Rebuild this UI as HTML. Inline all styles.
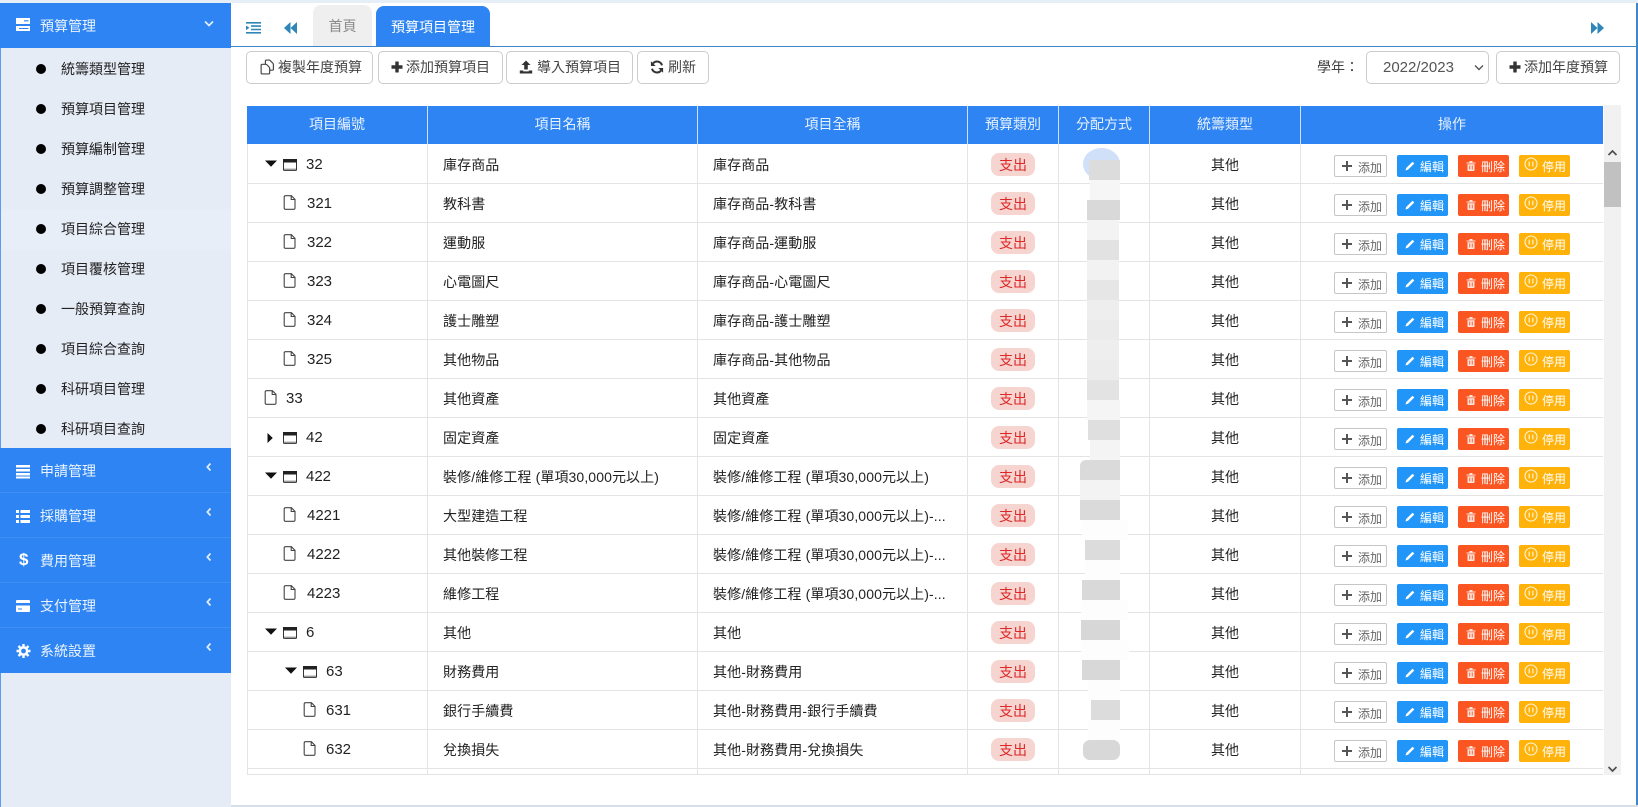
<!DOCTYPE html>
<html lang="zh-Hant"><head><meta charset="utf-8"><title>預算項目管理</title>
<style>
*{box-sizing:border-box}
html,body{margin:0;padding:0;width:1638px;height:807px;overflow:hidden;background:#fff;font-family:"Liberation Sans","Noto Sans CJK TC",sans-serif;font-size:14px;color:#222}
.a{position:absolute}
#top{left:0;top:0;width:1638px;height:3px;background:#e6eef8}
#side{left:0;top:3px;width:231px;height:804px;background:#e6ecf6;border-left:1px solid #5a9bee}
.hd{position:absolute;left:-1px;width:231px;height:45px;background:#2d84f2;color:#eaf3ff;border-bottom:1px solid #3e8ef4}
.hd b{position:absolute;left:40px;top:0;font-weight:400;line-height:47px;font-size:14px;white-space:nowrap}
.hd svg{position:absolute;left:16px;top:15px}
.hd i{position:absolute;left:205px;top:11px;font-style:normal}
.si{position:absolute;left:0;width:230px;height:40px;line-height:40px;color:#222}
.si b{font-weight:400;position:absolute;left:60px;top:0;font-size:14px;white-space:nowrap}
.si i{position:absolute;left:35px;top:15px;width:10px;height:10px;border-radius:50%;background:#000}
#rb{left:1636px;top:3px;width:2px;height:802px;background:#3f86c9}
#bb{left:231px;top:805px;width:1407px;height:2px;background:#d6e0ea}
#tl{left:231px;top:45.5px;width:1405px;height:1.5px;background:#3f86c9}
.tab{position:absolute;height:41px;border-radius:8px 8px 0 0;text-align:center;line-height:42px}
.btn{position:absolute;top:51px;height:33px;border:1px solid #ccc;border-radius:5px;background:#fff;color:#444;line-height:31px;font-size:14px;white-space:nowrap}
.btn svg{position:absolute;top:8px}
.btn b{position:absolute;top:0;font-weight:400}
#th{left:247px;top:106px;width:1356px;height:38px;background:#2d84f2;color:#e8f2ff}
#th span{position:absolute;top:0;height:38px;line-height:37px;text-align:center;border-right:1px solid #cfe1fb;font-size:14px}
#sb{left:1604px;top:105px;width:17px;height:670px;background:#f1f1f1}
#th span:last-child{border-right:0}
.vl{position:absolute;top:144px;width:1px;height:630px;background:#e4e4e4}
.r{position:absolute;left:247px;width:1356px;height:40px;border-bottom:1px solid #e4e4e4;line-height:42px;color:#222}
.r>span{position:absolute;top:0;white-space:nowrap}
.r>svg{position:absolute}
.r>span.d{font-size:15px}
.ca{top:16px}.wi{top:15px}.fi{top:12px}
.n{left:196px;letter-spacing:.1px}.f{left:466px;letter-spacing:.1px}.o{left:960px;width:36px;text-align:center}
.c{left:744px!important;top:9px!important;width:44px;height:23px;line-height:24px;border-radius:8px;background:#f6d5d0;color:#dc2828;text-align:center;font-size:14px;letter-spacing:0}
.p{position:absolute;top:11px;height:22px;width:51px;border-radius:2px;color:#fff;font-size:12px;line-height:24px;font-style:normal}
.p em{position:absolute;left:23px;top:0;font-style:normal;white-space:nowrap}
.p svg{position:absolute;left:7px;top:5px}
.p1{left:1087px;width:53px;background:#fff;border:1px solid #c6c6c6;color:#666;line-height:24px}
.p1 em{left:23px}.p1 svg{left:6px;top:4px}
.p2{left:1150px;background:#2196f8}
.p3{left:1211px;background:#fb5522}
.p4{left:1272px;background:#ffb30a}
.p4 svg{left:5px;top:2px}
.s{position:absolute;height:20px}
</style></head><body>
<svg width="0" height="0" style="position:absolute">
<symbol id="win" viewBox="0 0 14 12"><rect x=".5" y=".5" width="13" height="11" rx="1" fill="#fff" stroke="#333"/><rect x="0" y="0" width="14" height="3.5" fill="#222"/><rect x="1" y="9.6" width="12" height="1.6" fill="#999"/></symbol>
<symbol id="file" viewBox="0 0 13 15"><path d="M1.2 2Q1.2.7 2.5.7H8.4L12 4.3V13Q12 14.3 10.7 14.3H2.5Q1.2 14.3 1.2 13ZM8.2.9V4.5H12" fill="none" stroke="#444" stroke-width="1.1"/></symbol>
<symbol id="down" viewBox="0 0 12 7"><path d="M0 .5H12L6 6.8Z" fill="#111"/></symbol>
<symbol id="right" viewBox="0 0 7 12"><path d="M.5 0V12L6.8 6Z" fill="#111"/></symbol>
<symbol id="plus" viewBox="0 0 12 12"><path d="M5 1H7V5H11V7H7V11H5V7H1V5H5Z" fill="#555"/></symbol>
<symbol id="plusb" viewBox="0 0 12 12"><path d="M4.3 .5H7.7V4.3H11.5V7.7H7.7V11.5H4.3V7.7H.5V4.3H4.3Z" fill="#333"/></symbol>
<symbol id="pen" viewBox="0 0 12 12"><path d="M1.5 10.5L2.2 8 8.5 1.7 10.3 3.5 4 9.8Z" fill="#fff"/></symbol>
<symbol id="trash" viewBox="0 0 12 12"><path d="M1.5 2.5H10.5V3.5H1.5ZM4.5 1H7.5V2.5H4.5ZM2.5 4.2H9.5V10.2Q9.5 11 8.7 11H3.3Q2.5 11 2.5 10.2ZM4.3 5.5V9.5H5.2V5.5ZM6.8 5.5V9.5H7.7V5.5Z" fill="#fff" fill-opacity=".85" fill-rule="evenodd"/></symbol>
<symbol id="pause" viewBox="0 0 14 14"><circle cx="7" cy="7" r="6" fill="none" stroke="#fff" stroke-opacity=".85" stroke-width="1.1"/><path d="M5.2 4.6V9.4M8.8 4.6V9.4" stroke="#fff" stroke-opacity=".85" stroke-width="1.2"/></symbol>
<symbol id="chevl" viewBox="0 0 8 10"><path d="M5.5 1.5L2.3 5 5.5 8.5" fill="none" stroke="#e2eeff" stroke-width="1.7"/></symbol>
<symbol id="dbl" viewBox="0 0 13 12"><path d="M6.5 0V12L0 6ZM13 0V12L6.5 6Z" fill="#2f87b8"/></symbol>
</svg>
<div id="top" class="a"></div>
<div id="side" class="a">
<div class="hd" style="top:0;border:0"><svg width="15" height="14" viewBox="0 0 15 14" style="top:15px"><path d="M0 0H14V6H0ZM0 8H14V13H0Z" fill="#fff"/><path d="M8 2.2H12.5V3.4H8ZM3 10H12.5V11H3Z" fill="#2d84f2"/></svg><b>預算管理</b><i style="left:203px;top:17px"><svg width="12" height="8" viewBox="0 0 12 8" style="position:static;display:block"><path d="M2 1.5L6 5.5 10 1.5" fill="none" stroke="#e2eeff" stroke-width="1.7"/></svg></i></div>
<div class="si" style="top:46px"><i></i><b>統籌類型管理</b></div>
<div class="si" style="top:86px"><i></i><b>預算項目管理</b></div>
<div class="si" style="top:126px"><i></i><b>預算編制管理</b></div>
<div class="si" style="top:166px"><i></i><b>預算調整管理</b></div>
<div class="si" style="top:206px;background:#e8eef8"><i></i><b>項目綜合管理</b></div>
<div class="si" style="top:246px"><i></i><b>項目覆核管理</b></div>
<div class="si" style="top:286px"><i></i><b>一般預算查詢</b></div>
<div class="si" style="top:326px"><i></i><b>項目綜合查詢</b></div>
<div class="si" style="top:366px"><i></i><b>科研項目管理</b></div>
<div class="si" style="top:406px"><i></i><b>科研項目查詢</b></div>
<div class="hd" style="top:445px"><svg width="15" height="14" viewBox="0 0 15 14" style="top:17px"><path d="M0 0H14V2.5H0ZM0 4H14V6.5H0ZM0 8H14V10.5H0ZM0 11.5H14V13.5H0Z" fill="#fff"/></svg><b>申請管理</b><i><svg width="8" height="10" style="position:static"><use href="#chevl"/></svg></i></div>
<div class="hd" style="top:490px"><svg width="15" height="14" viewBox="0 0 15 14" style="top:17px"><path d="M0 0H3V3H0ZM4.5 0H14V3H4.5ZM0 5H3V8H0ZM4.5 5H14V8H4.5ZM0 10H3V13H0ZM4.5 10H14V13H4.5Z" fill="#fff"/></svg><b>採購管理</b><i><svg width="8" height="10" style="position:static"><use href="#chevl"/></svg></i></div>
<div class="hd" style="top:535px"><span class="a" style="left:19px;top:0;line-height:44px;font-size:17px;font-weight:700;color:#fff">$</span><b>費用管理</b><i><svg width="8" height="10" style="position:static"><use href="#chevl"/></svg></i></div>
<div class="hd" style="top:580px"><svg width="15" height="13" viewBox="0 0 15 13" style="top:17px"><path d="M1 0H13Q14 0 14 1V3H0V1Q0 0 1 0ZM0 5.5H14V11Q14 12 13 12H1Q0 12 0 11ZM2 8.5V9.5H6V8.5Z" fill="#fff" fill-rule="evenodd"/></svg><b>支付管理</b><i><svg width="8" height="10" style="position:static"><use href="#chevl"/></svg></i></div>
<div class="hd" style="top:625px;border:0"><svg width="15" height="14" viewBox="0 0 14 14" style="top:16px"><circle cx="7" cy="7" r="3.7" fill="none" stroke="#fff" stroke-width="2.6"/><path d="M7 0V14M0 7H14M2 2L12 12M12 2L2 12" stroke="#fff" stroke-width="2.4" stroke-dasharray="2.2 9.6 2.2 0"/></svg><b>系統設置</b><i><svg width="8" height="10" style="position:static"><use href="#chevl"/></svg></i></div>
</div>

<svg class="a" style="left:246px;top:22px" width="15" height="12" viewBox="0 0 15 12"><path d="M0 0H15V1.6H0ZM5 3.3H15V4.9H5ZM5 6.7H15V8.3H5ZM0 10H15V11.6H0ZM0 3.5L3.5 5.8 0 8.1Z" fill="#2f87b8"/></svg>
<svg class="a" style="left:284px;top:22px" width="13" height="12"><use href="#dbl"/></svg>
<div class="tab" style="left:313px;top:5px;width:59px;background:#efefef;color:#8a8a8a">首頁</div>
<div class="tab" style="left:376px;top:6px;width:114px;height:40px;background:#2d84f2;color:#fff">預算項目管理</div>
<svg class="a" style="left:1591px;top:22px;transform:scaleX(-1)" width="13" height="12"><use href="#dbl"/></svg>
<div id="tl" class="a"></div>
<div id="rb" class="a"></div>
<div id="bb" class="a"></div>

<div class="btn" style="left:246px;width:127px"><svg style="left:12px;top:7px" width="16" height="16" viewBox="0 0 15 15"><path d="M6 4.5V2Q6 1 7 1H9.5Q10 1 10.5 1.5L13 4Q13.5 4.5 13.5 5V9.5Q13.5 10.5 12.5 10.5H10M2 6Q2 5 3 5H6Q7 5 7.5 5.5L9.5 7.5Q10 8 10 9V13Q10 14 9 14H3Q2 14 2 13Z" fill="none" stroke="#444" stroke-width="1.1"/></svg><b style="left:31px">複製年度預算</b></div>
<div class="btn" style="left:378px;width:125px"><svg style="left:12px;top:9px" width="12" height="12"><use href="#plusb"/></svg><b style="left:27px">添加預算項目</b></div>
<div class="btn" style="left:506px;width:127px"><svg style="left:12px" width="14" height="14" viewBox="0 0 14 14"><path d="M7 .5L11.5 5H8.8V9.5H5.2V5H2.5ZM.8 10.5H4.2V11.4H9.8V10.5H13.2V13.5H.8Z" fill="#333"/></svg><b style="left:30px">導入預算項目</b></div>
<div class="btn" style="left:637px;width:72px"><svg style="left:12px" width="14" height="14" viewBox="0 0 14 14"><path d="M12 5.3A5.2 5.2 0 0 0 3 3.4M2 8.7A5.2 5.2 0 0 0 11 10.6" fill="none" stroke="#333" stroke-width="2"/><path d="M.9 1.2V6H5.7ZM13.1 12.8V8H8.3Z" fill="#333"/></svg><b style="left:30px">刷新</b></div>
<span class="a" style="left:1317px;top:51px;line-height:33px;color:#444;white-space:nowrap">學年：</span>
<div class="btn" style="left:1366px;width:123px"><b style="left:16px;font-size:15px;color:#555">2022/2023</b><svg style="left:107px;top:12px" width="10" height="7" viewBox="0 0 10 7"><path d="M1 1.5L5 5.5 9 1.5" fill="none" stroke="#555" stroke-width="1.4"/></svg></div>
<div class="btn" style="left:1496px;width:124px"><svg style="left:12px;top:9px" width="12" height="12"><use href="#plusb"/></svg><b style="left:27px">添加年度預算</b></div>

<div id="sb" class="a"></div>
<div class="a" style="left:1604px;top:162px;width:17px;height:45px;background:#c1c1c1"></div>
<svg class="a" style="left:1607px;top:149px" width="11" height="8" viewBox="0 0 11 8"><path d="M1.5 6L5.5 2 9.5 6" fill="none" stroke="#505050" stroke-width="1.7"/></svg>
<svg class="a" style="left:1607px;top:765px" width="11" height="8" viewBox="0 0 11 8"><path d="M1.5 2L5.5 6 9.5 2" fill="none" stroke="#505050" stroke-width="1.7"/></svg>

<div id="th" class="a"><span style="left:0;width:181px">項目編號</span><span style="left:181px;width:270px">項目名稱</span><span style="left:451px;width:270px">項目全稱</span><span style="left:721px;width:91px">預算類別</span><span style="left:812px;width:91px">分配方式</span><span style="left:903px;width:151px">統籌類型</span><span style="left:1054px;width:302px">操作</span></div>

<div class="vl" style="left:247px"></div><div class="vl" style="left:427px"></div><div class="vl" style="left:697px"></div><div class="vl" style="left:967px"></div><div class="vl" style="left:1058px"></div><div class="vl" style="left:1149px"></div><div class="vl" style="left:1300px"></div>
<div class="a" style="left:247px;top:774px;width:1356px;height:1px;background:#e4e4e4"></div>

<div class="r" style="top:144px"><svg class="ca" style="left:18px" width="12" height="7"><use href="#down"/></svg><svg class="wi" style="left:36px" width="14" height="12"><use href="#win"/></svg><span class="d" style="left:59px">32</span><span class="n">庫存商品</span><span class="f">庫存商品</span><span class="c">支出</span><span class="o">其他</span><i class="p p1"><svg width="12" height="12"><use href="#plus"/></svg><em>添加</em></i><i class="p p2"><svg width="12" height="12"><use href="#pen"/></svg><em>編輯</em></i><i class="p p3"><svg width="12" height="12"><use href="#trash"/></svg><em>刪除</em></i><i class="p p4"><svg width="14" height="14"><use href="#pause"/></svg><em>停用</em></i></div>
<div class="r" style="top:183px"><svg class="fi" style="left:36px" width="13" height="15"><use href="#file"/></svg><span class="d" style="left:60px">321</span><span class="n">教科書</span><span class="f">庫存商品-教科書</span><span class="c">支出</span><span class="o">其他</span><i class="p p1"><svg width="12" height="12"><use href="#plus"/></svg><em>添加</em></i><i class="p p2"><svg width="12" height="12"><use href="#pen"/></svg><em>編輯</em></i><i class="p p3"><svg width="12" height="12"><use href="#trash"/></svg><em>刪除</em></i><i class="p p4"><svg width="14" height="14"><use href="#pause"/></svg><em>停用</em></i></div>
<div class="r" style="top:222px"><svg class="fi" style="left:36px" width="13" height="15"><use href="#file"/></svg><span class="d" style="left:60px">322</span><span class="n">運動服</span><span class="f">庫存商品-運動服</span><span class="c">支出</span><span class="o">其他</span><i class="p p1"><svg width="12" height="12"><use href="#plus"/></svg><em>添加</em></i><i class="p p2"><svg width="12" height="12"><use href="#pen"/></svg><em>編輯</em></i><i class="p p3"><svg width="12" height="12"><use href="#trash"/></svg><em>刪除</em></i><i class="p p4"><svg width="14" height="14"><use href="#pause"/></svg><em>停用</em></i></div>
<div class="r" style="top:261px"><svg class="fi" style="left:36px" width="13" height="15"><use href="#file"/></svg><span class="d" style="left:60px">323</span><span class="n">心電圖尺</span><span class="f">庫存商品-心電圖尺</span><span class="c">支出</span><span class="o">其他</span><i class="p p1"><svg width="12" height="12"><use href="#plus"/></svg><em>添加</em></i><i class="p p2"><svg width="12" height="12"><use href="#pen"/></svg><em>編輯</em></i><i class="p p3"><svg width="12" height="12"><use href="#trash"/></svg><em>刪除</em></i><i class="p p4"><svg width="14" height="14"><use href="#pause"/></svg><em>停用</em></i></div>
<div class="r" style="top:300px"><svg class="fi" style="left:36px" width="13" height="15"><use href="#file"/></svg><span class="d" style="left:60px">324</span><span class="n">護士雕塑</span><span class="f">庫存商品-護士雕塑</span><span class="c">支出</span><span class="o">其他</span><i class="p p1"><svg width="12" height="12"><use href="#plus"/></svg><em>添加</em></i><i class="p p2"><svg width="12" height="12"><use href="#pen"/></svg><em>編輯</em></i><i class="p p3"><svg width="12" height="12"><use href="#trash"/></svg><em>刪除</em></i><i class="p p4"><svg width="14" height="14"><use href="#pause"/></svg><em>停用</em></i></div>
<div class="r" style="top:339px"><svg class="fi" style="left:36px" width="13" height="15"><use href="#file"/></svg><span class="d" style="left:60px">325</span><span class="n">其他物品</span><span class="f">庫存商品-其他物品</span><span class="c">支出</span><span class="o">其他</span><i class="p p1"><svg width="12" height="12"><use href="#plus"/></svg><em>添加</em></i><i class="p p2"><svg width="12" height="12"><use href="#pen"/></svg><em>編輯</em></i><i class="p p3"><svg width="12" height="12"><use href="#trash"/></svg><em>刪除</em></i><i class="p p4"><svg width="14" height="14"><use href="#pause"/></svg><em>停用</em></i></div>
<div class="r" style="top:378px"><svg class="fi" style="left:17px" width="13" height="15"><use href="#file"/></svg><span class="d" style="left:39px">33</span><span class="n">其他資產</span><span class="f">其他資產</span><span class="c">支出</span><span class="o">其他</span><i class="p p1"><svg width="12" height="12"><use href="#plus"/></svg><em>添加</em></i><i class="p p2"><svg width="12" height="12"><use href="#pen"/></svg><em>編輯</em></i><i class="p p3"><svg width="12" height="12"><use href="#trash"/></svg><em>刪除</em></i><i class="p p4"><svg width="14" height="14"><use href="#pause"/></svg><em>停用</em></i></div>
<div class="r" style="top:417px"><svg style="left:20px;top:16px" width="6" height="10"><use href="#right"/></svg><svg class="wi" style="left:36px" width="14" height="12"><use href="#win"/></svg><span class="d" style="left:59px">42</span><span class="n">固定資產</span><span class="f">固定資產</span><span class="c">支出</span><span class="o">其他</span><i class="p p1"><svg width="12" height="12"><use href="#plus"/></svg><em>添加</em></i><i class="p p2"><svg width="12" height="12"><use href="#pen"/></svg><em>編輯</em></i><i class="p p3"><svg width="12" height="12"><use href="#trash"/></svg><em>刪除</em></i><i class="p p4"><svg width="14" height="14"><use href="#pause"/></svg><em>停用</em></i></div>
<div class="r" style="top:456px"><svg class="ca" style="left:18px" width="12" height="7"><use href="#down"/></svg><svg class="wi" style="left:36px" width="14" height="12"><use href="#win"/></svg><span class="d" style="left:59px">422</span><span class="n">裝修/維修工程 (單項30,000元以上)</span><span class="f">裝修/維修工程 (單項30,000元以上)</span><span class="c">支出</span><span class="o">其他</span><i class="p p1"><svg width="12" height="12"><use href="#plus"/></svg><em>添加</em></i><i class="p p2"><svg width="12" height="12"><use href="#pen"/></svg><em>編輯</em></i><i class="p p3"><svg width="12" height="12"><use href="#trash"/></svg><em>刪除</em></i><i class="p p4"><svg width="14" height="14"><use href="#pause"/></svg><em>停用</em></i></div>
<div class="r" style="top:495px"><svg class="fi" style="left:36px" width="13" height="15"><use href="#file"/></svg><span class="d" style="left:60px">4221</span><span class="n">大型建造工程</span><span class="f">裝修/維修工程 (單項30,000元以上)-...</span><span class="c">支出</span><span class="o">其他</span><i class="p p1"><svg width="12" height="12"><use href="#plus"/></svg><em>添加</em></i><i class="p p2"><svg width="12" height="12"><use href="#pen"/></svg><em>編輯</em></i><i class="p p3"><svg width="12" height="12"><use href="#trash"/></svg><em>刪除</em></i><i class="p p4"><svg width="14" height="14"><use href="#pause"/></svg><em>停用</em></i></div>
<div class="r" style="top:534px"><svg class="fi" style="left:36px" width="13" height="15"><use href="#file"/></svg><span class="d" style="left:60px">4222</span><span class="n">其他裝修工程</span><span class="f">裝修/維修工程 (單項30,000元以上)-...</span><span class="c">支出</span><span class="o">其他</span><i class="p p1"><svg width="12" height="12"><use href="#plus"/></svg><em>添加</em></i><i class="p p2"><svg width="12" height="12"><use href="#pen"/></svg><em>編輯</em></i><i class="p p3"><svg width="12" height="12"><use href="#trash"/></svg><em>刪除</em></i><i class="p p4"><svg width="14" height="14"><use href="#pause"/></svg><em>停用</em></i></div>
<div class="r" style="top:573px"><svg class="fi" style="left:36px" width="13" height="15"><use href="#file"/></svg><span class="d" style="left:60px">4223</span><span class="n">維修工程</span><span class="f">裝修/維修工程 (單項30,000元以上)-...</span><span class="c">支出</span><span class="o">其他</span><i class="p p1"><svg width="12" height="12"><use href="#plus"/></svg><em>添加</em></i><i class="p p2"><svg width="12" height="12"><use href="#pen"/></svg><em>編輯</em></i><i class="p p3"><svg width="12" height="12"><use href="#trash"/></svg><em>刪除</em></i><i class="p p4"><svg width="14" height="14"><use href="#pause"/></svg><em>停用</em></i></div>
<div class="r" style="top:612px"><svg class="ca" style="left:18px" width="12" height="7"><use href="#down"/></svg><svg class="wi" style="left:36px" width="14" height="12"><use href="#win"/></svg><span class="d" style="left:59px">6</span><span class="n">其他</span><span class="f">其他</span><span class="c">支出</span><span class="o">其他</span><i class="p p1"><svg width="12" height="12"><use href="#plus"/></svg><em>添加</em></i><i class="p p2"><svg width="12" height="12"><use href="#pen"/></svg><em>編輯</em></i><i class="p p3"><svg width="12" height="12"><use href="#trash"/></svg><em>刪除</em></i><i class="p p4"><svg width="14" height="14"><use href="#pause"/></svg><em>停用</em></i></div>
<div class="r" style="top:651px"><svg class="ca" style="left:38px" width="12" height="7"><use href="#down"/></svg><svg class="wi" style="left:56px" width="14" height="12"><use href="#win"/></svg><span class="d" style="left:79px">63</span><span class="n">財務費用</span><span class="f">其他-財務費用</span><span class="c">支出</span><span class="o">其他</span><i class="p p1"><svg width="12" height="12"><use href="#plus"/></svg><em>添加</em></i><i class="p p2"><svg width="12" height="12"><use href="#pen"/></svg><em>編輯</em></i><i class="p p3"><svg width="12" height="12"><use href="#trash"/></svg><em>刪除</em></i><i class="p p4"><svg width="14" height="14"><use href="#pause"/></svg><em>停用</em></i></div>
<div class="r" style="top:690px"><svg class="fi" style="left:56px" width="13" height="15"><use href="#file"/></svg><span class="d" style="left:79px">631</span><span class="n">銀行手續費</span><span class="f">其他-財務費用-銀行手續費</span><span class="c">支出</span><span class="o">其他</span><i class="p p1"><svg width="12" height="12"><use href="#plus"/></svg><em>添加</em></i><i class="p p2"><svg width="12" height="12"><use href="#pen"/></svg><em>編輯</em></i><i class="p p3"><svg width="12" height="12"><use href="#trash"/></svg><em>刪除</em></i><i class="p p4"><svg width="14" height="14"><use href="#pause"/></svg><em>停用</em></i></div>
<div class="r" style="top:729px"><svg class="fi" style="left:56px" width="13" height="15"><use href="#file"/></svg><span class="d" style="left:79px">632</span><span class="n">兌換損失</span><span class="f">其他-財務費用-兌換損失</span><span class="c">支出</span><span class="o">其他</span><i class="p p1"><svg width="12" height="12"><use href="#plus"/></svg><em>添加</em></i><i class="p p2"><svg width="12" height="12"><use href="#pen"/></svg><em>編輯</em></i><i class="p p3"><svg width="12" height="12"><use href="#trash"/></svg><em>刪除</em></i><i class="p p4"><svg width="14" height="14"><use href="#pause"/></svg><em>停用</em></i></div>

<div class="a" style="left:1083px;top:148px;width:37px;height:32px;border-radius:50%;background:#cfe0f8"></div>
<div class="s" style="left:1089px;top:160px;width:31px;background:#dcdcdc"></div>
<div class="s" style="left:1090px;top:180px;width:30px;background:#f6f6f6"></div>
<div class="s" style="left:1087px;top:200px;width:33px;background:#d9d9d9"></div>
<div class="s" style="left:1087px;top:220px;width:32px;background:#f3f3f3"></div>
<div class="s" style="left:1087px;top:240px;width:32px;background:#e2e2e2"></div>
<div class="s" style="left:1087px;top:260px;width:32px;background:#f2f2f2"></div>
<div class="s" style="left:1087px;top:280px;width:32px;background:#e6e6e6"></div>
<div class="s" style="left:1087px;top:300px;width:32px;background:#eeeeee"></div>
<div class="s" style="left:1087px;top:320px;width:32px;background:#ebebeb"></div>
<div class="s" style="left:1087px;top:340px;width:32px;background:#eeeeee"></div>
<div class="s" style="left:1087px;top:360px;width:32px;background:#ececec"></div>
<div class="s" style="left:1087px;top:380px;width:32px;background:#e3e3e3"></div>
<div class="s" style="left:1087px;top:400px;width:33px;background:#f5f5f5"></div>
<div class="s" style="left:1088px;top:420px;width:32px;background:#dfdfdf"></div>
<div class="s" style="left:1090px;top:440px;width:30px;background:#f4f4f4"></div>
<div class="s" style="left:1080px;top:460px;width:40px;background:#dadada;border-radius:6px 0 0 0"></div>
<div class="s" style="left:1080px;top:480px;width:40px;background:#f3f3f3"></div>
<div class="s" style="left:1080px;top:500px;width:40px;background:#dadada"></div>
<div class="s" style="left:1082px;top:520px;width:46px;background:#fdfdfd"></div>
<div class="s" style="left:1085px;top:540px;width:35px;background:#dcdcdc"></div>
<div class="s" style="left:1085px;top:560px;width:35px;background:#fdfdfd"></div>
<div class="s" style="left:1082px;top:580px;width:38px;background:#d9d9d9"></div>
<div class="s" style="left:1081px;top:600px;width:47px;background:#fdfdfd"></div>
<div class="s" style="left:1081px;top:620px;width:39px;background:#d7d7d7"></div>
<div class="s" style="left:1081px;top:640px;width:48px;background:#fdfdfd"></div>
<div class="s" style="left:1082px;top:660px;width:38px;background:#d8d8d8"></div>
<div class="s" style="left:1088px;top:680px;width:32px;background:#fdfdfd"></div>
<div class="s" style="left:1091px;top:700px;width:29px;background:#dcdcdc"></div>
<div class="s" style="left:1088px;top:720px;width:32px;background:#fdfdfd"></div>
<div class="s" style="left:1083px;top:740px;width:37px;background:#d8d8d8;border-radius:7px"></div>
</body></html>
